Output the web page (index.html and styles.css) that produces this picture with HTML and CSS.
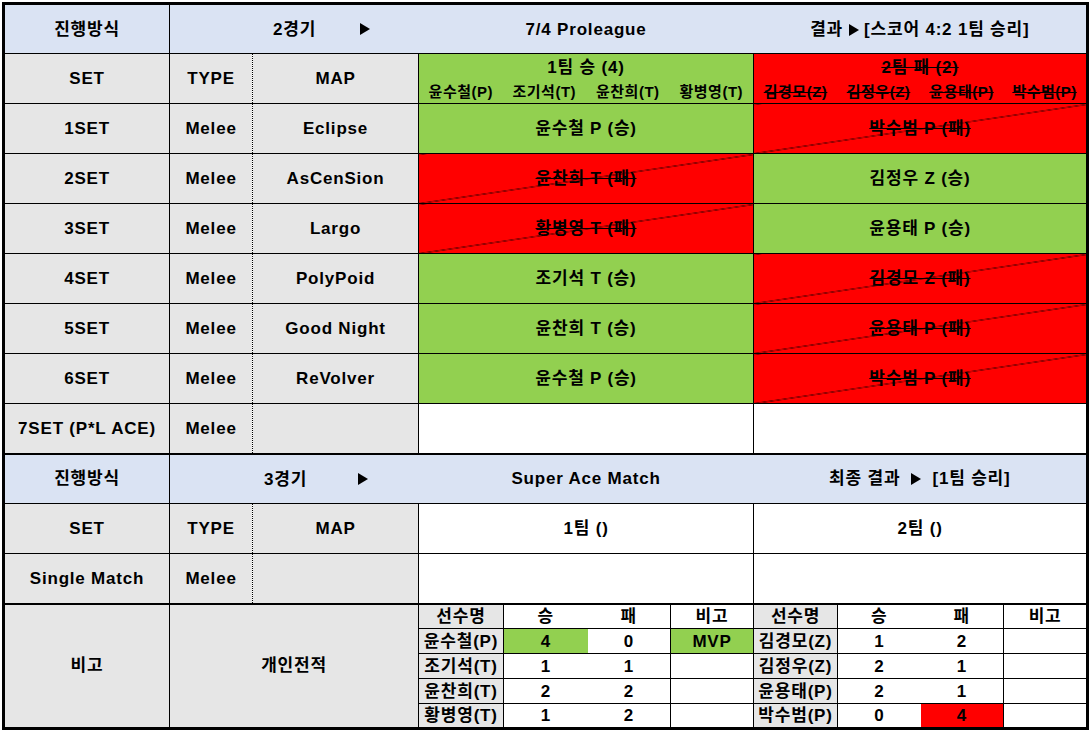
FILE: index.html
```html
<!DOCTYPE html>
<html lang="ko">
<head>
<meta charset="utf-8">
<title>Proleague</title>
<link rel="stylesheet" href="styles.css">
</head>
<body>
<div class="page">
<table class="sheet">
  <colgroup>
    <col class="w83"><col class="w83"><col class="w83"><col class="w84"><col class="w82">
    <col class="w85"><col class="w84"><col class="w83"><col class="w83">
    <col class="w84"><col class="w83"><col class="w83"><col class="w84">
  </colgroup>
  <tr class="r50 hdr">
    <td colspan="2">진행방식</td>
    <td colspan="3" class="game g2 nr"><span class="gtxt">2경기</span><i class="tri"></i></td>
    <td colspan="4" class="nl nr">7/4 Proleague</td>
    <td colspan="4" class="nl">결과 <i class="tri"></i> [스코어 4:2 1팀 승리]</td>
  </tr>
  <tr class="r50">
    <td colspan="2" class="gray">SET</td>
    <td class="gray dot">TYPE</td>
    <td colspan="2" class="gray dl">MAP</td>
    <td colspan="4" class="win team">
      <div class="tt">1팀 승 (4)</div>
      <div class="names"><span>윤수철(P)</span><span>조기석(T)</span><span>윤찬희(T)</span><span>황병영(T)</span></div>
    </td>
    <td colspan="4" class="red strike team">
      <div class="tt">2팀 패 (2)</div>
      <div class="names"><span>김경모(Z)</span><span>김정우(Z)</span><span>윤용태(P)</span><span>박수범(P)</span></div>
    </td>
  </tr>
  <tr class="r50">
    <td colspan="2" class="gray">1SET</td><td class="gray dot">Melee</td><td colspan="2" class="gray dl">Eclipse</td>
    <td colspan="4" class="win">윤수철 P (승)</td><td colspan="4" class="lose">박수범 P (패)</td>
  </tr>
  <tr class="r50">
    <td colspan="2" class="gray">2SET</td><td class="gray dot">Melee</td><td colspan="2" class="gray dl">AsCenSion</td>
    <td colspan="4" class="lose">윤찬희 T (패)</td><td colspan="4" class="win">김정우 Z (승)</td>
  </tr>
  <tr class="r50">
    <td colspan="2" class="gray">3SET</td><td class="gray dot">Melee</td><td colspan="2" class="gray dl">Largo</td>
    <td colspan="4" class="lose">황병영 T (패)</td><td colspan="4" class="win">윤용태 P (승)</td>
  </tr>
  <tr class="r50">
    <td colspan="2" class="gray">4SET</td><td class="gray dot">Melee</td><td colspan="2" class="gray dl">PolyPoid</td>
    <td colspan="4" class="win">조기석 T (승)</td><td colspan="4" class="lose">김경모 Z (패)</td>
  </tr>
  <tr class="r50">
    <td colspan="2" class="gray">5SET</td><td class="gray dot">Melee</td><td colspan="2" class="gray dl">Good Night</td>
    <td colspan="4" class="win">윤찬희 T (승)</td><td colspan="4" class="lose">윤용태 P (패)</td>
  </tr>
  <tr class="r50">
    <td colspan="2" class="gray">6SET</td><td class="gray dot">Melee</td><td colspan="2" class="gray dl">ReVolver</td>
    <td colspan="4" class="win">윤수철 P (승)</td><td colspan="4" class="lose">박수범 P (패)</td>
  </tr>
  <tr class="r50 sep">
    <td colspan="2" class="gray">7SET (P*L ACE)</td><td class="gray dot">Melee</td><td colspan="2" class="gray dl"></td>
    <td colspan="4"></td><td colspan="4"></td>
  </tr>
  <tr class="r50 hdr">
    <td colspan="2">진행방식</td>
    <td colspan="3" class="game g3 nr"><span class="gtxt">3경기</span><i class="tri"></i></td>
    <td colspan="4" class="nl nr">Super Ace Match</td>
    <td colspan="4" class="nl">최종 결과 &nbsp;<i class="tri"></i>&nbsp; [1팀 승리]</td>
  </tr>
  <tr class="r50">
    <td colspan="2" class="gray">SET</td>
    <td class="gray dot">TYPE</td>
    <td colspan="2" class="gray dl">MAP</td>
    <td colspan="4">1팀 ()</td>
    <td colspan="4">2팀 ()</td>
  </tr>
  <tr class="r50 sep">
    <td colspan="2" class="gray">Single Match</td><td class="gray dot">Melee</td><td colspan="2" class="gray dl"></td>
    <td colspan="4"></td><td colspan="4"></td>
  </tr>
  <tr class="r25">
    <td colspan="2" rowspan="5" class="gray">비고</td>
    <td colspan="3" rowspan="5" class="gray">개인전적</td>
    <td class="gray">선수명</td><td class="nr">승</td><td class="nl">패</td><td>비고</td>
    <td class="gray">선수명</td><td class="nr">승</td><td class="nl">패</td><td>비고</td>
  </tr>
  <tr class="r25">
    <td class="gray">윤수철(P)</td><td class="green nr">4</td><td class="nl">0</td><td class="green">MVP</td>
    <td class="gray">김경모(Z)</td><td class="nr">1</td><td class="nl">2</td><td></td>
  </tr>
  <tr class="r25">
    <td class="gray">조기석(T)</td><td class="nr">1</td><td class="nl">1</td><td></td>
    <td class="gray">김정우(Z)</td><td class="nr">2</td><td class="nl">1</td><td></td>
  </tr>
  <tr class="r25">
    <td class="gray">윤찬희(T)</td><td class="nr">2</td><td class="nl">2</td><td></td>
    <td class="gray">윤용태(P)</td><td class="nr">2</td><td class="nl">1</td><td></td>
  </tr>
  <tr class="r25">
    <td class="gray">황병영(T)</td><td class="nr">1</td><td class="nl">2</td><td></td>
    <td class="gray">박수범(P)</td><td class="nr">0</td><td class="nl red">4</td><td></td>
  </tr>
</table>
</div>
</body>
</html>
```

FILE: styles.css
```css
html, body {
  margin: 0;
  padding: 0;
  background: #ffffff;
}

.page {
  padding: 2px 0 0 2px;
}

.sheet {
  border-collapse: collapse;
  table-layout: fixed;
  width: 1084px;
  border: 3px solid #000;
  background: #ffffff;
}

.w82 { width: 82px; }
.w83 { width: 83px; }
.w84 { width: 84px; }
.w85 { width: 85px; }

.sheet td {
  border: 1px solid #000;
  padding: 0;
  text-align: center;
  vertical-align: middle;
  font-family: "Liberation Sans", "Noto Sans CJK KR", sans-serif;
  font-weight: bold;
  font-size: 17px;
  line-height: 1;
  letter-spacing: 0.8px;
  color: #000;
  white-space: nowrap;
  overflow: hidden;
}

.r50 { height: 50px; }
.r25 { height: 25px; }

.hdr td { background: #dae3f3; }

.gray { background: #e6e6e6; }
.sheet td.green { background: #92d050; }
.sheet td.red { background: #ff0000; }

.win { background: #92d050; }

.lose {
  background-color: #ff0000;
  background-image: linear-gradient(to bottom right,
    transparent calc(50% - 0.6px),
    #000 50%,
    transparent calc(50% + 0.6px));
  text-decoration: line-through;
}

.strike { text-decoration: line-through; }

.sheet td.dot { border-right: 1px dotted #000; }
.sheet td.dl { border-left: 1px dotted #000; }

.sheet td.nr { border-right: hidden; }
.sheet td.nl { border-left: hidden; }

.sep td { border-bottom: 2px solid #000; }

.team { padding-top: 2px; }

.tt {
  margin-bottom: 8px;
}

.names {
  display: grid;
  grid-template-columns: repeat(4, 1fr);
  font-size: 15px;
  letter-spacing: 0.5px;
}

.sheet td.game {
  text-align: left;
}

.game .gtxt {
  display: inline-block;
  vertical-align: middle;
}

.sheet td.g2 { padding-left: 103px; }
.g2 .gtxt { margin-right: 44px; }

.sheet td.g3 { padding-left: 94px; }
.g3 .gtxt { margin-right: 51px; }

.tri {
  display: inline-block;
  width: 0;
  height: 0;
  border-left: 10px solid #000;
  border-top: 6px solid transparent;
  border-bottom: 6px solid transparent;
  vertical-align: -1px;
}
```
